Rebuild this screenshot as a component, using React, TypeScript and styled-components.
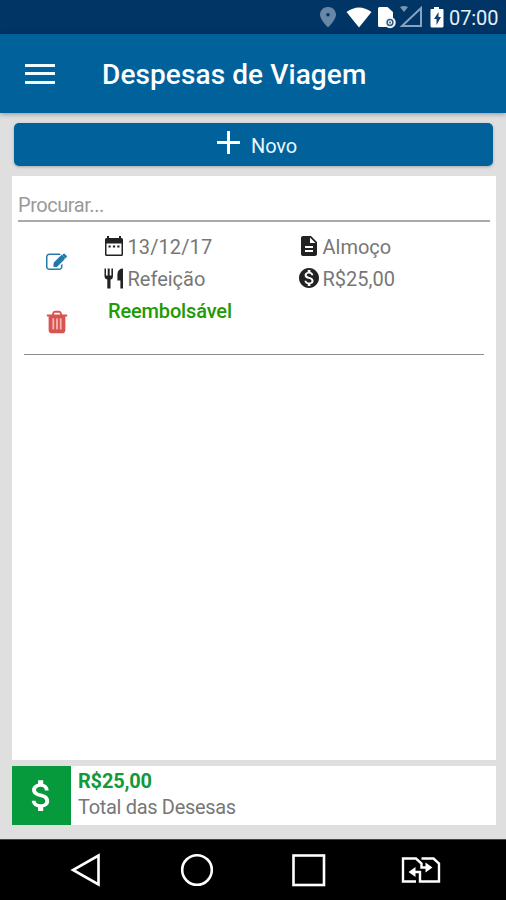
import React from "react";
import styled, { createGlobalStyle } from "styled-components";
import { MdAttachMoney, MdDescription, MdMonetizationOn } from "react-icons/md";

const GlobalStyle = createGlobalStyle`
  * { box-sizing: border-box; }
  body { margin: 0; background: #e0e0e0; font-family: Roboto, "Liberation Sans", sans-serif; }
  svg { display: block; flex: none; }
`;

const Screen = styled.div`
  width: 506px;
  height: 900px;
  display: flex;
  flex-direction: column;
  background: #dfdfdf;
  overflow: hidden;
`;

const StatusBar = styled.div`
  height: 34px;
  flex: none;
  display: flex;
  align-items: center;
  justify-content: flex-end;
  padding-right: 7px;
  background: #013566;
  color: #e8f0f6;
`;

const Clock = styled.span`
  width: 50px;
  margin-left: 5px;
  padding-top: 2px;
  font-size: 20px;
  line-height: 24px;
  white-space: nowrap;
  letter-spacing: -0.1px;
`;

const AppBar = styled.header`
  height: 79px;
  flex: none;
  display: flex;
  align-items: center;
  padding: 3px 0 0 25px;
  background: #01619b;
  color: #fff;
  box-shadow: 0 1px 5px rgba(0, 0, 0, 0.35);
`;

const MenuButton = styled.div`
  width: 30px;
  height: 20px;
  display: flex;
  flex-direction: column;
  justify-content: space-between;
  margin: -3px 47px 0 0;
`;

const MenuLine = styled.span`
  height: 3px;
  background: #f0fbff;
`;

const Title = styled.h1`
  margin: 0;
  font-size: 28px;
  line-height: 32px;
  font-weight: 500;
  letter-spacing: 0.1px;
  white-space: nowrap;
`;

const Content = styled.main`
  flex: 1;
  display: flex;
  flex-direction: column;
  padding: 10px 10px 14px 12px;
`;

const NewButton = styled.div`
  height: 43px;
  flex: none;
  display: flex;
  align-items: center;
  margin: 0 3px 10px 2px;
  padding-left: 203px;
  gap: 11px;
  border-radius: 5px;
  background: #01619b;
  color: #e9f7ff;
  font-size: 20px;
  line-height: 24px;
  box-shadow: 0 1px 3px rgba(0, 0, 0, 0.25);
  svg { margin-top: -4px; }
  span { padding-top: 2px; letter-spacing: -0.1px; }
`;

const ListCard = styled.section`
  height: 584px;
  flex: none;
  padding: 12px 6px 0;
  background: #fff;
`;

const Search = styled.div`
  height: 34px;
  padding-top: 5px;
  border-bottom: 2px solid #a9a9a9;
  color: #999;
  font-size: 20px;
  line-height: 24px;
  letter-spacing: -0.45px;
`;

const Entry = styled.article`
  height: 133px;
  display: flex;
  margin: 0 6px;
  border-bottom: 1.5px solid #8c8c8c;
`;

const Actions = styled.div`
  width: 78px;
  display: flex;
  flex-direction: column;
  padding: 30px 0 0 22px;
`;

const TrashSlot = styled.div`
  margin: 36px 0 0 -2px;
`;

const Details = styled.div`
  display: grid;
  grid-template-columns: 195px 180px;
  grid-template-rows: 32px 32px 32px;
  align-content: start;
  padding-top: 8px;
`;

const Detail = styled.div`
  height: 32px;
  display: flex;
  align-items: center;
  color: #777;
  font-size: 20px;
  line-height: 24px;
`;

const IconSlot = styled.div`
  width: 24px;
  height: 24px;
  display: flex;
  align-items: center;
  justify-content: center;
  margin-right: 1.5px;
  color: #222;
`;

const DetailText = styled.span<{ $spacing?: number }>`
  padding-top: 2px;
  white-space: nowrap;
  letter-spacing: ${(p) => p.$spacing ?? 0}px;
`;

const Refundable = styled.div`
  padding: 5px 0 0 6px;
  color: #229a04;
  font-size: 20px;
  line-height: 24px;
  font-weight: 500;
  letter-spacing: -0.15px;
`;

const TotalCard = styled.section`
  height: 59px;
  flex: none;
  display: flex;
  margin-top: 6px;
  background: #fff;
`;

const TotalBadge = styled.div`
  width: 59px;
  display: flex;
  align-items: center;
  justify-content: center;
  background: #079a3c;
  color: #fff;
`;

const TotalText = styled.div`
  padding: 2px 0 0 7px;
  font-size: 20px;
  line-height: 27px;
  white-space: nowrap;
`;

const Amount = styled.div`
  color: #109a3c;
  font-weight: 700;
  line-height: 26px;
  letter-spacing: -0.2px;
`;

const Label = styled.div`
  color: #777;
  letter-spacing: -0.32px;
`;

const CardColumn = styled.div`
  width: 484px;
`;

const NavBar = styled.nav`
  height: 61px;
  flex: none;
  display: flex;
  align-items: flex-start;
  border-top: 1px solid #444;
  background: #000;
`;

const CalendarIcon = () => (
  <svg width="20" height="20" viewBox="0 0 20 20">
    <path fill="#222" fillRule="evenodd" d="M3 0h2v2h10V0h2v2h.5Q19 2 19 3.500v15Q19 20 17.500 20h-15Q1 20 1 18.500v-15Q1 2 2.500 2H3zM2.500 7.500v11h15v-11z" />
    <path fill="#222" d="M4.500 9.500h2.200v2H4.500zM8.900 9.500h2.200v2H8.900zM13.300 9.500h2.200v2h-2.200z" />
  </svg>
);

const CutleryIcon = () => (
  <svg width="20" height="21" viewBox="0 0 20 21" fill="#222">
    <path d="M.5.500h1.500v7h1.700v-7h2v7h1.700v-7h1.600v8Q9 11 6.500 11.600V20.500H3.300v-9Q.5 11 .5 8z" />
    <path d="M19 .500v20h-2.600v-8h-3V6Q14 .500 19 .500z" />
  </svg>
);

const EditIcon = () => (
  <svg width="21" height="21" viewBox="0 0 1792 1792" fill="#247ba9">
    <path fill="#1d6fa5" d="M672 896l672-672 288 288-672 672H672z" />
    <path d="M888 1184l116-116-152-152-116 116v56h96v96h56zm440-720q-16-16-33 1l-350 350q-17 17-1 33t33-1l350-350q17-17 1-33zm80 594v190q0 119-84.500 203.500t-203.500 84.500h-832q-119 0-203.500-84.500t-84.500-203.500v-832q0-119 84.500-203.500t203.500-84.500h832q63 0 117 25 15 7 18 23 3 17-9 29l-49 49q-14 14-32 8-23-6-45-6h-832q-66 0-113 47t-47 113v832q0 66 47 113t113 47h832q66 0 113-47t47-113v-126q0-13 9-22l64-64q15-15 35-7t20 29zm-96-738l288 288-672 672h-288v-288zm444 132l-92 92-288-288 92-92q28-28 68-28t68 28l152 152q28 28 28 68t-28 68z" />
  </svg>
);

const TrashIcon = () => (
  <svg width="26" height="26" viewBox="0 0 1792 1792" fill="#d9534f">
    <path fill="#f0b5b2" d="M550 600h690v850H550z" />
    <path d="M704 1376v-704q0-14-9-23t-23-9h-64q-14 0-23 9t-9 23v704q0 14 9 23t23 9h64q14 0 23-9t9-23zm256 0v-704q0-14-9-23t-23-9h-64q-14 0-23 9t-9 23v704q0 14 9 23t23 9h64q14 0 23-9t9-23zm256 0v-704q0-14-9-23t-23-9h-64q-14 0-23 9t-9 23v704q0 14 9 23t23 9h64q14 0 23-9t9-23zm-544-992h448l-48-117q-7-9-17-11h-317q-10 2-17 11zm928 32v64q0 14-9 23t-23 9h-96v948q0 83-47 143.500t-113 60.500h-832q-66 0-113-58.500t-47-141.500v-952h-96q-14 0-23-9t-9-23v-64q0-14 9-23t23-9h309l70-167q15-37 54-63t79-26h320q40 0 79 26t54 63l70 167h309q14 0 23 9t9 23z" />
  </svg>
);

const StatusIcons = () => (
  <svg width="124" height="34" viewBox="320 0 124 34">
    <path fill="#6887a6" fillRule="evenodd" d="M328 7c-4.700 0-8 3.500-8 7.800 0 5 8 12.700 8 12.700s8-7.700 8-12.700C336 10.500 332.700 7 328 7zm0 6a1.800 1.800 0 1 1 0 3.600 1.800 1.800 0 0 1 0-3.600z" />
    <path fill="#fff" d="M346.500 12q12.500-9 25 0L359 27.500z" />
    <path fill="#fff" d="M379.500 7h8l5.500 5v8h-2l-3 7h-8.500q-1.500 0-1.500-1.500v-17Q378 7 379.500 7z" />
    <circle cx="390" cy="22.500" r="5.700" fill="#f4f8fb" />
    <circle cx="390" cy="22.500" r="2.900" fill="none" stroke="#31597f" strokeWidth="1.500" />
    <circle cx="390" cy="22.500" r="1" fill="#31597f" />
    <path fill="none" stroke="#86a5c0" strokeWidth="2" d="M421 8v18h-19z" />
    <path fill="#7897b4" d="M400 7q4-2 8 0l-4 5z" />
    <path fill="#fff" d="M434 7h5v2h3.500q1 0 1 1v16q0 1.500-1.500 1.500h-10q-1.500 0-1.500-1.500V10q0-1 1-1h2.500z" />
    <path fill="#123f6b" d="M438.500 12v5h2.500l-4.500 8v-6H434z" />
  </svg>
);

const NavIcons = () => (
  <svg width="506" height="60" viewBox="0 840 506 60" fill="none" stroke="#fff" strokeWidth="2.600">
    <path d="M98.500 855.500v29L73 870z" />
    <circle cx="197" cy="870" r="14.800" />
    <rect x="293.500" y="855.500" width="30.500" height="29.500" />
    <g strokeWidth="2.400">
      <path d="M416 881.500h-13v-23h13l5.500 5v4H430M421.500 858.500h12l5.500 5v18h-19v-9.500H411" />
      <path fill="#fff" stroke="none" d="M425.500 862.500l7 5-7 5zM415.500 867l-7 5 7 5z" />
    </g>
  </svg>
);

export default function App() {
  return (
    <Screen>
      <GlobalStyle />
      <StatusBar>
        <StatusIcons />
        <Clock>07:00</Clock>
      </StatusBar>
      <AppBar>
        <MenuButton>
          <MenuLine />
          <MenuLine />
          <MenuLine />
        </MenuButton>
        <Title>Despesas de Viagem</Title>
      </AppBar>
      <Content>
        <NewButton>
          <svg width="23" height="23" viewBox="0 0 23 23">
            <path d="M0 11.500h23M11.500 0v23" stroke="#fff" strokeWidth="3" />
          </svg>
          <span>Novo</span>
        </NewButton>
        <CardColumn>
          <ListCard>
            <Search>Procurar...</Search>
            <Entry>
              <Actions>
                <EditIcon />
                <TrashSlot>
                  <TrashIcon />
                </TrashSlot>
              </Actions>
              <Details>
                <Detail>
                  <IconSlot><CalendarIcon /></IconSlot>
                  <DetailText $spacing={0.1}>13/12/17</DetailText>
                </Detail>
                <Detail>
                  <IconSlot><MdDescription size={24} /></IconSlot>
                  <DetailText>Almoço</DetailText>
                </Detail>
                <Detail>
                  <IconSlot><CutleryIcon /></IconSlot>
                  <DetailText>Refeição</DetailText>
                </Detail>
                <Detail>
                  <IconSlot><MdMonetizationOn size={24} /></IconSlot>
                  <DetailText>R$25,00</DetailText>
                </Detail>
                <Refundable>Reembolsável</Refundable>
              </Details>
            </Entry>
          </ListCard>
          <TotalCard>
            <TotalBadge><MdAttachMoney size={41} /></TotalBadge>
            <TotalText>
              <Amount>R$25,00</Amount>
              <Label>Total das Desesas</Label>
            </TotalText>
          </TotalCard>
        </CardColumn>
      </Content>
      <NavBar>
        <NavIcons />
      </NavBar>
    </Screen>
  );
}
